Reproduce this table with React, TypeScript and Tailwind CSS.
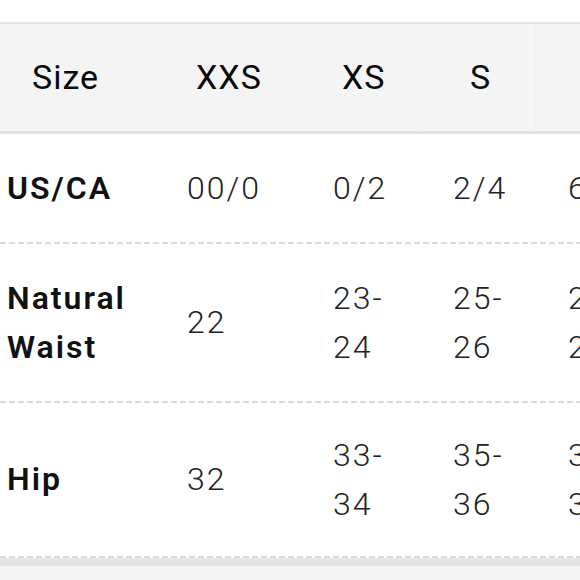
const cols = 'grid grid-cols-[165px_140px_116px_114px_115px]'

const rows = [
  { label: ['US/CA'], h: 'h-[108px]', values: ['00/0', '0/2', '2/4', '6/8'] },
  { label: ['Natural', 'Waist'], h: 'h-[157px]', values: ['22', '23-24', '25-26', '27-28'] },
  { label: ['Hip'], h: 'h-[153px]', values: ['32', '33-34', '35-36', '37-38'] },
]

const bodyPad = ['pl-[22px]', 'pl-[28px]', 'pl-[32px]', 'pl-[33px]']

function Dashed() {
  return (
    <div className="h-[2px] w-full bg-[repeating-linear-gradient(90deg,#dadada_0px,#dadada_6px,transparent_6px,transparent_9px)]" />
  )
}

export default function App() {
  return (
    <div className="h-[580px] w-[580px] overflow-hidden bg-white font-['Roboto',sans-serif] text-[#111]">
      <div className="h-[22px]" />
      <div className={`${cols} h-[112px] border-t-2 border-b-[3px] border-[#e3e3e3] bg-[#f4f4f4] text-[34px] font-normal tracking-[1px] text-[#0a0a0a]`}>
        <div className="flex items-center pl-[32px]">Size</div>
        <div className="flex items-center pl-[31px]">XXS</div>
        <div className="flex items-center pl-[37px]">XS</div>
        <div className="flex items-center border-l border-[#efefef] pl-[48px]">S</div>
        <div className="flex items-center border-l border-[#efefef] pl-[48px]">M</div>
      </div>
      {rows.map((row, i) => (
        <div key={row.label.join(' ')}>
          {i > 0 && <Dashed />}
          <div className={`${cols} ${row.h} leading-[49px]`}>
            <div className="flex items-center pl-[7px] text-[32px] font-semibold tracking-[2px]">
              <div>
                {row.label.map((l) => (
                  <div key={l}>{l}</div>
                ))}
              </div>
            </div>
            {row.values.map((v, j) => (
              <div
                key={v}
                className={`flex items-center ${bodyPad[j]} text-[32px] font-light tracking-[2px] text-[#222]`}>
                <div>{v}</div>
              </div>
            ))}
          </div>
        </div>
      ))}
      <Dashed />
      <div className="h-[2px] bg-[#e6e6e6]" />
      <div className="h-[6px] bg-[#e2e2e2]" />
      <div className="h-[40px] bg-[#f4f4f4]" />
    </div>
  )
}
